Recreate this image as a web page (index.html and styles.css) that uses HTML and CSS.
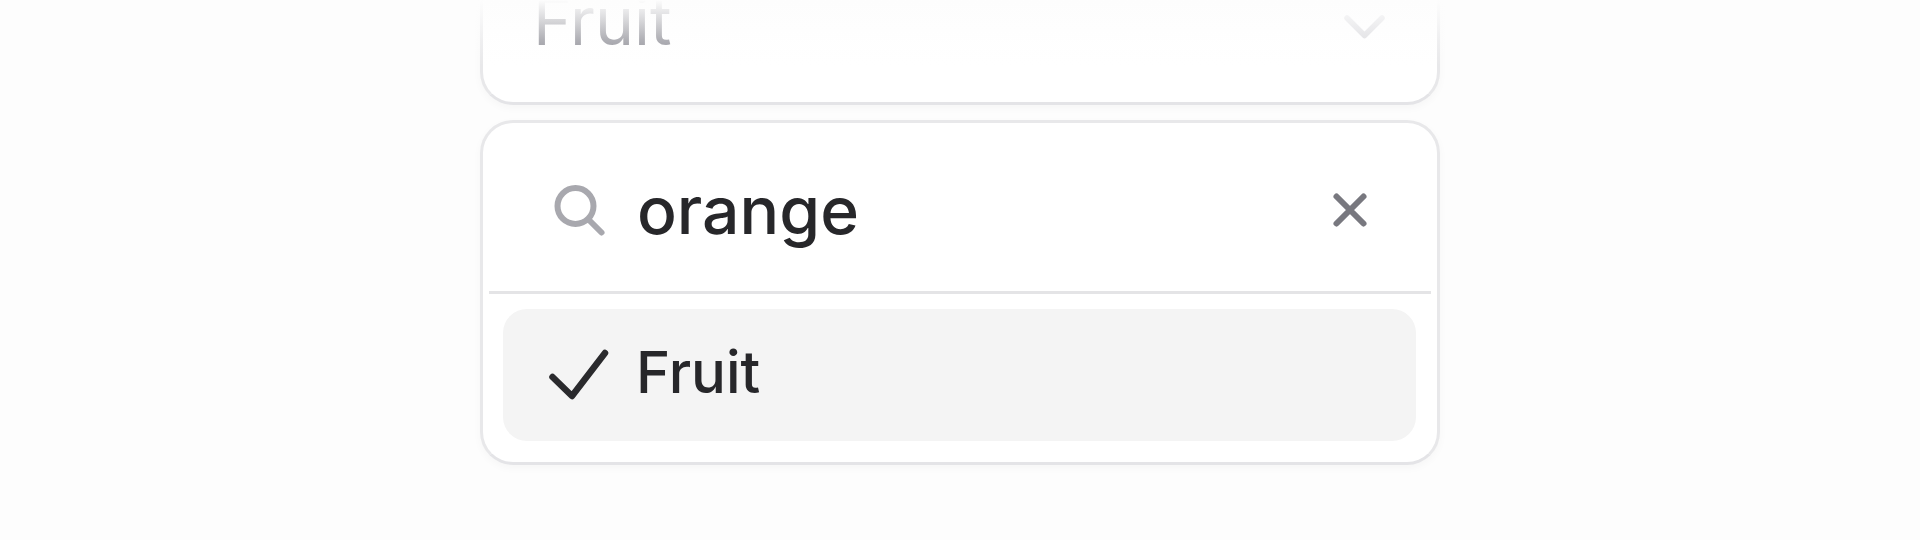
FILE: index.html
```html
<!DOCTYPE html>
<html lang="en">
<head>
<meta charset="utf-8">
<title>Select</title>
<link rel="stylesheet" href="styles.css">
</head>
<body>
<div class="fade"></div>
<main class="stack">
  <section class="card trigger">
    <span class="trigger-label">Fruit</span>
    <svg class="icon chevron" viewBox="0 0 54 54"><path d="M9 18 L26.5 35.5 L44 18"/></svg>
  </section>
  <section class="card menu">
    <div class="search">
      <svg class="icon search-icon" viewBox="0 0 54 54"><circle cx="21.5" cy="22" r="18"/><path d="M35 36 L47.5 48.5"/></svg>
      <span class="query">orange</span>
      <svg class="icon clear" viewBox="0 0 54 54"><path d="M13.5 13.5 L40.5 40.5 M40.5 13.5 L13.5 40.5"/></svg>
    </div>
    <div class="divider"></div>
    <div class="list">
      <div class="item">
        <svg class="icon check" viewBox="0 0 66 66"><path d="M7.5 32 L27 51 L60 8"/></svg>
        <span class="item-label">Fruit</span>
      </div>
    </div>
  </section>
</main>
</body>
</html>
```
FILE: styles.css
```css
* { box-sizing: border-box; }
html, body { margin: 0; height: 540px; overflow: hidden; }
body {
  background: #fdfdfd;
  font-family: Inter, "Liberation Sans", sans-serif;
  color: #27272a;
}
.fade {
  position: absolute;
  left: 0; top: 0; right: 0;
  height: 66px;
  background: linear-gradient(to bottom, #fdfdfd 0%, rgba(253,253,253,.68) 30%, rgba(253,253,253,.33) 60%, rgba(253,253,253,0) 100%);
  z-index: 2;
}
.stack {
  width: 960px;
  margin: -51px auto 0;
  display: flex;
  flex-direction: column;
  gap: 15px;
}
.card {
  background: #fff;
  border: 3px solid #e8e8ea;
  border-bottom-color: #e4e4e7;
  border-radius: 33px;
  box-shadow: 0 3px 9px rgba(0,0,0,.03);
}
.icon { display: block; fill: none; stroke-linecap: round; stroke-linejoin: round; flex: none; }
.trigger {
  height: 156px;
  display: flex;
  align-items: center;
  justify-content: space-between;
  padding: 0 45px 12px 50px;
}
.trigger-label { font-size: 66px; line-height: 72px; color: #8a8a92; }
.chevron { width: 54px; height: 54px; stroke: #d8d8dc; stroke-width: 5.5; margin-top: 12px; }
.search {
  height: 168px;
  display: flex;
  align-items: center;
  padding: 0 60px 0 71px;
  gap: 29px;
  margin-top: 3px;
}
.search-icon { width: 54px; height: 54px; stroke: #a8a8ae; stroke-width: 6; margin-top: 2px; }
.query { flex: 1; font-size: 66px; line-height: 72px; font-weight: 500; }
.clear { width: 54px; height: 54px; stroke: #78787f; stroke-width: 6; }
.divider { height: 3px; margin: -3px 6px 0; background: #e4e4e6; }
.list { padding: 15px 21px 21px 20px; }
.item {
  height: 132px;
  background: #f4f4f4;
  border-radius: 24px;
  display: flex;
  align-items: center;
  padding-left: 42px;
  gap: 25px;
}
.check { width: 66px; height: 66px; stroke: #2a2a2d; stroke-width: 6.5; margin-top: 6px; }
.item-label { font-size: 58px; line-height: 72px; font-weight: 500; margin-bottom: 7px; }
```
